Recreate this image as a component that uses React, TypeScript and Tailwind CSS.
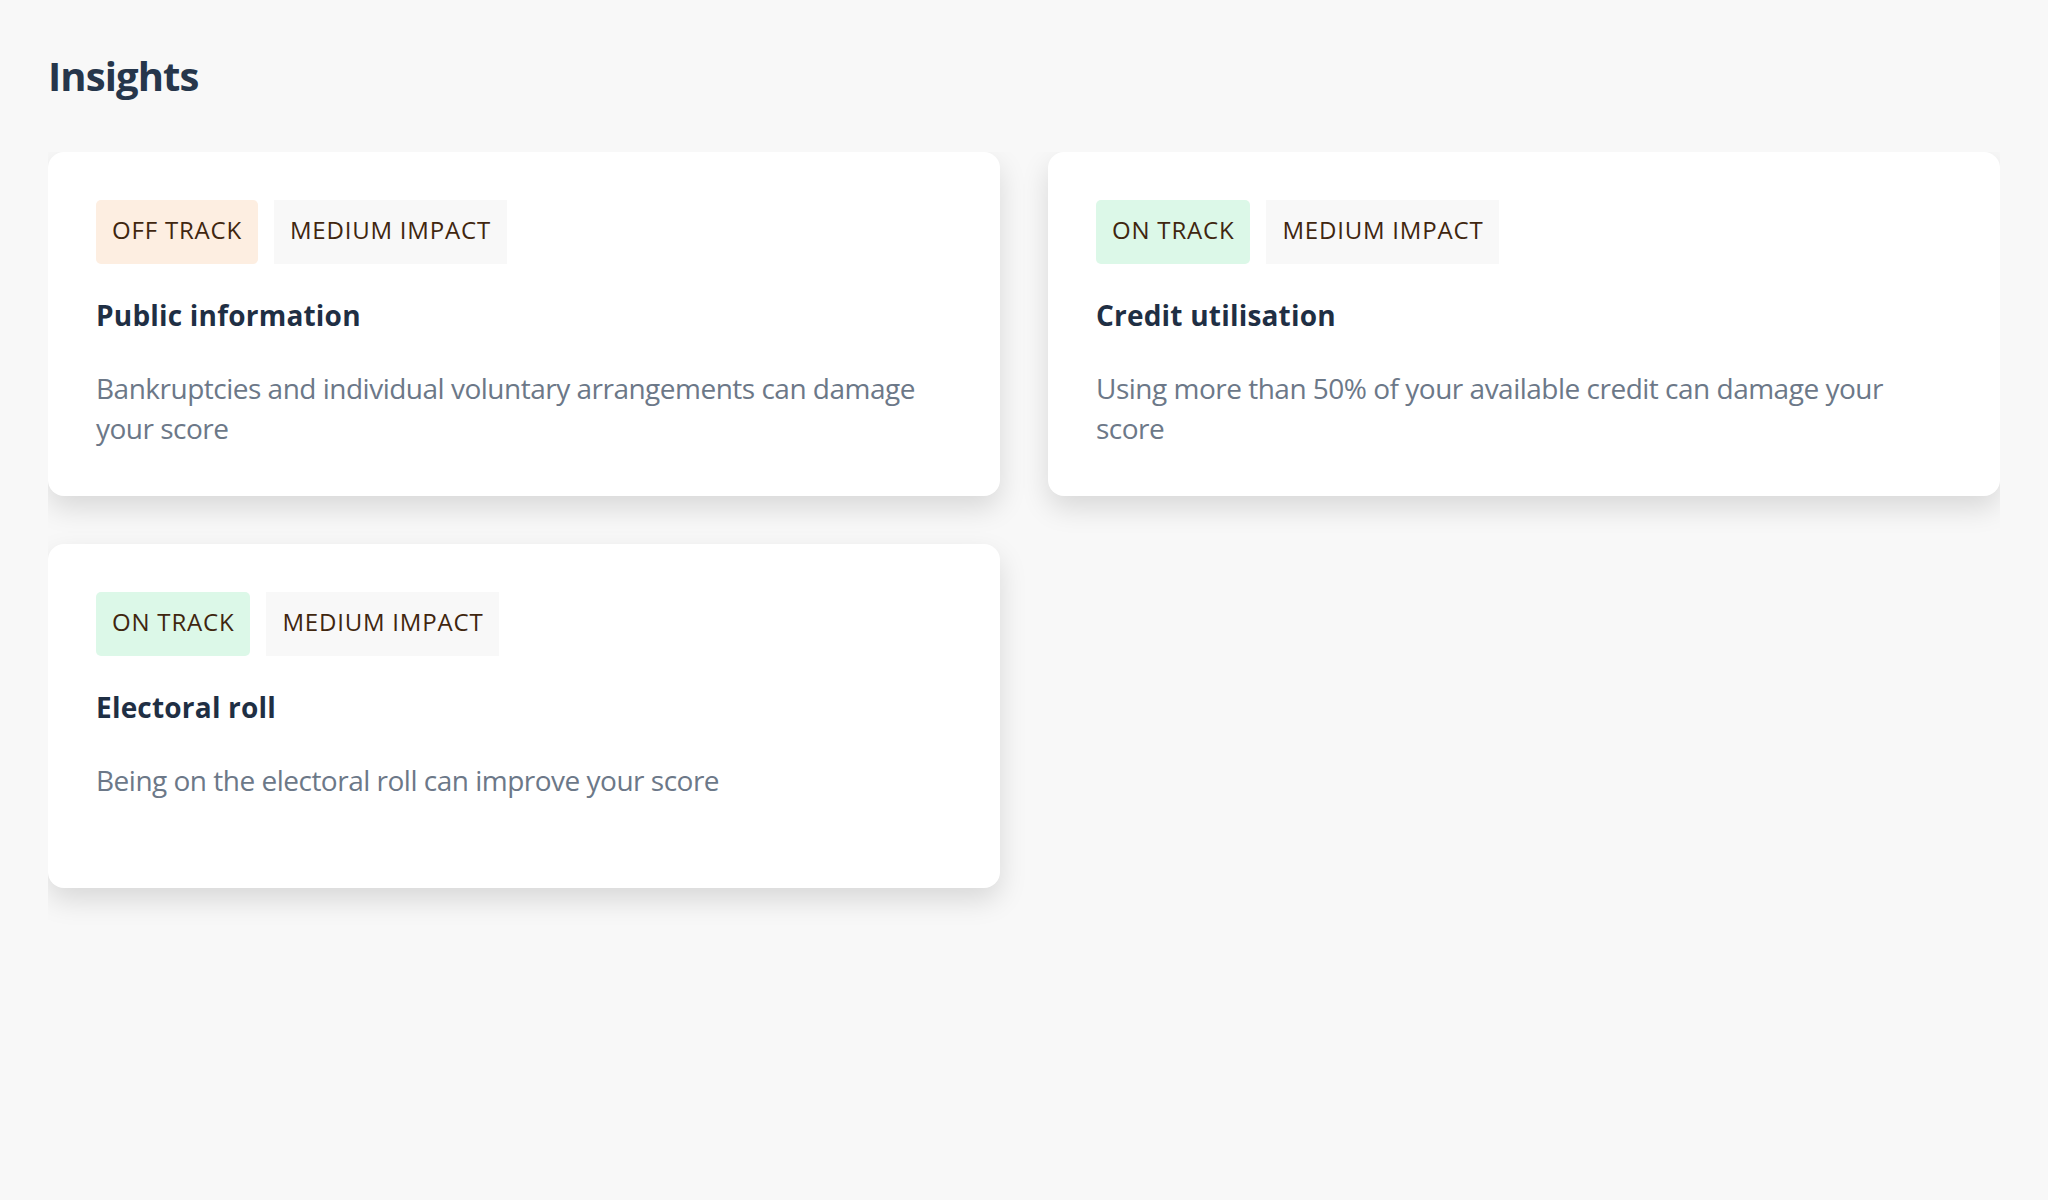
import React from "react";

type Insight = {
  status: "off" | "on";
  title: string;
  text: string;
};

const insights: Insight[] = [
  {
    status: "off",
    title: "Public information",
    text: "Bankruptcies and individual voluntary arrangements can damage your score",
  },
  {
    status: "on",
    title: "Credit utilisation",
    text: "Using more than 50% of your available credit can damage your score",
  },
  {
    status: "on",
    title: "Electoral roll",
    text: "Being on the electoral roll can improve your score",
  },
];

function Card({ item }: { item: Insight }) {
  return (
    <div className="bg-white rounded-2xl p-12 shadow-[0_12px_28px_rgba(0,0,0,0.13)]">
      <div className="flex gap-4">
        {item.status === "off" ? (
          <span className="rounded-[5px] bg-[#fdeee1] px-4 pt-[14px] pb-[18px] text-[24px] leading-[32px] text-[#40260f] tracking-[0.8px]">
            OFF TRACK
          </span>
        ) : (
          <span className="rounded-[5px] bg-[#dcf8e8] px-4 pt-[14px] pb-[18px] text-[24px] leading-[32px] text-[#40260f] tracking-[0.8px]">
            ON TRACK
          </span>
        )}
        <span className="bg-[#f8f8f8] px-4 pt-[14px] pb-[18px] text-[24px] leading-[32px] text-[#40260f] tracking-[0.8px]">
          MEDIUM IMPACT
        </span>
      </div>
      <h2 className="mt-[33px] text-[28px] leading-[36px] font-bold text-[#1f2f44] tracking-[0.2px]">
        {item.title}
      </h2>
      <p className="mt-[35px] text-[28px] leading-[40px] text-[#6c7888] tracking-[-0.5px]">
        {item.text}
      </p>
    </div>
  );
}

export default function App() {
  return (
    <div
      className="min-h-[1200px] bg-[#f8f8f8] px-12 pt-[52px]"
      style={{ fontFamily: '"Open Sans", "Noto Sans", sans-serif' }}
    >
      <h1 className="text-[40px] leading-[48px] font-bold text-[#26364b] tracking-[-0.9px]">
        Insights
      </h1>
      <div className="mt-[52px] overflow-hidden pb-12">
        <div className="grid grid-cols-2 auto-rows-fr gap-12">
          {insights.map((it, i) => (
            <Card key={i} item={it} />
          ))}
        </div>
      </div>
    </div>
  );
}
